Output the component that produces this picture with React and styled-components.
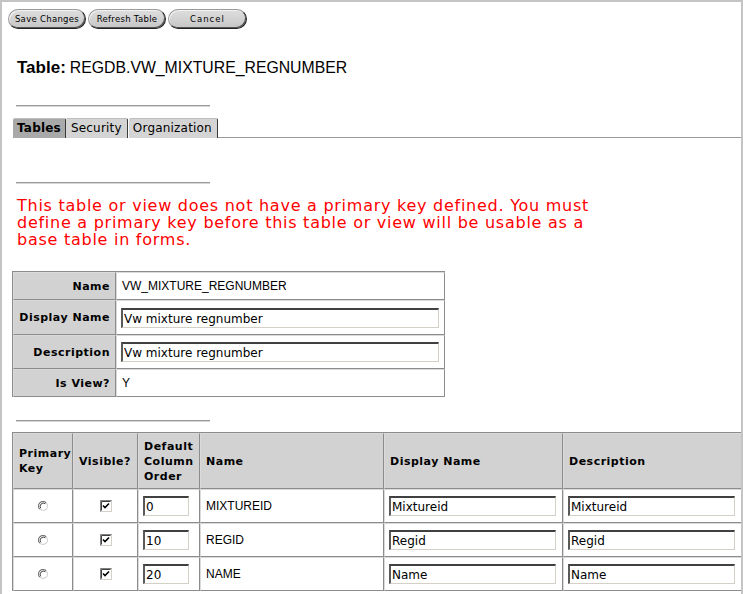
import React from 'react';
import styled, { createGlobalStyle } from 'styled-components';

const GlobalStyle = createGlobalStyle`
  html, body {
    margin: 0;
    padding: 0;
    background: #fff;
  }
  body {
    font-family: "DejaVu Sans", Verdana, sans-serif;
  }
`;

const Frame = styled.div`
  width: 743px;
  height: 594px;
  box-sizing: border-box;
  border: 2px solid #c4c4c4;
  border-bottom: none;
  overflow: hidden;
  background: #fff;
`;

const Toolbar = styled.div`
  display: flex;
  gap: 2px;
  margin: 7px 0 0 6px;
`;

const PillButton = styled.button`
  width: ${p => p.w || 78}px;
  height: 20px;
  padding: 0;
  border-radius: 10px;
  border: 1px solid #9a9a9a;
  border-right-color: #222;
  border-bottom-color: #222;
  box-shadow: inset -1px -1px 0 #555, inset 1px 1px 0 #f2f2f2;
  background: linear-gradient(#dedede, #c6c6c6);
  font-family: "DejaVu Sans", Verdana, sans-serif;
  font-size: 8.5px;
  letter-spacing: ${p => p.ls || 0.3}px;
  color: #000;
  cursor: pointer;
`;

const Title = styled.div`
  margin: 29px 0 0 15px;
  height: 20px;
  line-height: 20px;
  font-family: "Liberation Sans", Arial, sans-serif;
  color: #000;
  white-space: nowrap;
`;

const TitleLabel = styled.span`
  font-size: 17px;
  font-weight: bold;
`;

const TitleValue = styled.span`
  font-size: 15.8px;
  margin-left: 4px;
`;

const Rule = styled.div`
  width: 194px;
  height: 0;
  border-top: 1px solid #9a9a9a;
  border-bottom: 1px solid #d6d6d6;
  margin: ${p => p.mt}px 0 0 14px;
`;

const TabBar = styled.div`
  display: flex;
  align-items: flex-end;
  margin: 10px 0 0 11px;
  height: 21px;
`;

const Tab = styled.div`
  height: 20px;
  box-sizing: border-box;
  padding: 0 ${p => p.pr || 4}px 0 ${p => p.pl || 4}px;
  margin-right: ${p => p.gap || 0}px;
  border-top: 1px solid #bdbdbd;
  border-right: 1px solid #3a3a3a;
  border-radius: 2px 2px 0 0;
  background: ${p => (p.active ? '#a9a9a9' : '#d4d4d4')};
  font-size: 12px;
  font-weight: ${p => (p.active ? 'bold' : 'normal')};
  letter-spacing: 0.2px;
  line-height: 19px;
  color: #000;
  white-space: nowrap;
`;

const TabFill = styled.div`
  flex: 1;
  height: 0;
  border-bottom: 1px solid #9a9a9a;
`;

const Warning = styled.p`
  margin: 13px 0 0 15px;
  width: 600px;
  font-size: 16px;
  line-height: 17px;
  letter-spacing: 0.74px;
  color: #ff0000;
`;

const Grid = styled.table`
  border-collapse: separate;
  border-spacing: 0;
  table-layout: fixed;
  border-left: 1px solid #8c8c8c;
  border-top: 1px solid #8c8c8c;
  margin: ${p => p.mt}px 0 0 10px;
  width: ${p => p.w}px;
`;

const Cell = styled.td`
  box-sizing: border-box;
  height: ${p => p.h}px;
  padding: ${p => (p.field ? '0 5px 0 4px' : '0 5px')};
  border-style: solid;
  border-width: 1px;
  border-color: #dadada #8c8c8c #8c8c8c #dadada;
  background: ${p => (p.head ? '#d2d2d2' : '#fff')};
  text-align: ${p => p.align || 'left'};
  vertical-align: middle;
  font-family: ${p => (p.head ? '"DejaVu Sans", Verdana, sans-serif' : '"Liberation Sans", Arial, sans-serif')};
  font-size: ${p => (p.head ? 11 : 12)}px;
  font-weight: ${p => (p.head ? 'bold' : 'normal')};
  letter-spacing: ${p => (p.head ? 0.5 : 0)}px;
  line-height: 15px;
  color: #000;
  white-space: ${p => (p.wrap ? 'normal' : 'nowrap')};
`;

const Field = styled.input`
  display: block;
  box-sizing: border-box;
  width: ${p => p.w}px;
  height: 20px;
  margin: 0;
  padding: 1px 1px 0;
  border-style: solid;
  border-width: 2px 1px 1px 2px;
  border-color: #404040 #d4d0c8 #d4d0c8 #5a5a5a;
  background: #fff;
  font-family: "DejaVu Sans", Verdana, sans-serif;
  font-size: 12px;
  color: #000;
  outline: none;
`;

const Mark = styled.svg`
  display: block;
  margin: 0 auto;
`;

function Radio() {
  return (
    <Mark width="12" height="12" viewBox="0 0 12 12">
      <circle cx="6" cy="6" r="4.5" fill="#fff" />
      <path d="M2.8 9.2 A4.5 4.5 0 0 1 9.2 2.8" fill="none" stroke="#6a6a6a" strokeWidth="1.1" />
      <path d="M9.2 2.8 A4.5 4.5 0 0 1 2.8 9.2" fill="none" stroke="#d0d0d0" strokeWidth="1.1" />
      <path d="M3.7 8.3 A3.3 3.3 0 0 1 8.3 3.7" fill="none" stroke="#303030" strokeWidth="0.9" />
    </Mark>
  );
}

function Check() {
  return (
    <Mark width="12" height="12" viewBox="0 0 12 12">
      <rect x="0.5" y="0.5" width="11" height="11" fill="#fff" stroke="#d4d0c8" />
      <path d="M0.5 11.5 V0.5 H11.5" fill="none" stroke="#808080" />
      <path d="M1.5 10.5 V1.5 H10.5" fill="none" stroke="#404040" />
      <path d="M3 5.5 L5 7.5 L9 3.5" fill="none" stroke="#000" strokeWidth="1.6" />
    </Mark>
  );
}

const props = [
  { label: 'Name', value: 'VW_MIXTURE_REGNUMBER', h: 28 },
  { label: 'Display Name', input: 'Vw mixture regnumber', h: 35 },
  { label: 'Description', input: 'Vw mixture regnumber', h: 34 },
  { label: 'Is View?', value: 'Y', h: 28 },
];

const columns = [
  { id: 'pk', title: 'Primary Key', w: 60 },
  { id: 'vis', title: 'Visible?', w: 65 },
  { id: 'order', title: 'Default Column Order', w: 62 },
  { id: 'name', title: 'Name', w: 184 },
  { id: 'disp', title: 'Display Name', w: 179 },
  { id: 'desc', title: 'Description', w: 180 },
];

const rows = [
  { order: '0', name: 'MIXTUREID', disp: 'Mixtureid' },
  { order: '10', name: 'REGID', disp: 'Regid' },
  { order: '20', name: 'NAME', disp: 'Name' },
];

export default function App() {
  return (
    <>
      <GlobalStyle />
      <Frame>
        <Toolbar>
          <PillButton>Save Changes</PillButton>
          <PillButton>Refresh Table</PillButton>
          <PillButton w={79} ls={1}>Cancel</PillButton>
        </Toolbar>

        <Title>
          <TitleLabel>Table:</TitleLabel>
          <TitleValue>REGDB.VW_MIXTURE_REGNUMBER</TitleValue>
        </Title>

        <Rule mt={27} />

        <TabBar>
          <Tab active pl={4} pr={4}>Tables</Tab>
          <Tab gap={1} pl={5} pr={5}>Security</Tab>
          <Tab pl={4} pr={5}>Organization</Tab>
          <TabFill />
        </TabBar>

        <Rule mt={44} />

        <Warning>
          This table or view does not have a primary key defined. You must
          define a primary key before this table or view will be usable as a
          base table in forms.
        </Warning>

        <Grid mt={23} w={433}>
          <colgroup>
            <col style={{ width: 103 }} />
            <col style={{ width: 329 }} />
          </colgroup>
          <tbody>
            {props.map(p => (
              <tr key={p.label}>
                <Cell head align="right" h={p.h}>{p.label}</Cell>
                {p.input ? (
                  <Cell field h={p.h}><Field w={318} defaultValue={p.input} /></Cell>
                ) : (
                  <Cell h={p.h}>{p.value}</Cell>
                )}
              </tr>
            ))}
          </tbody>
        </Grid>

        <Rule mt={23} />

        <Grid mt={10} w={731}>
          <colgroup>
            {columns.map(c => <col key={c.id} style={{ width: c.w }} />)}
          </colgroup>
          <thead>
            <tr>
              {columns.map(c => (
                <Cell as="th" head wrap h={56} key={c.id}>{c.title}</Cell>
              ))}
            </tr>
          </thead>
          <tbody>
            {rows.map(r => (
              <tr key={r.name}>
                <Cell h={34} align="center"><Radio /></Cell>
                <Cell h={34} align="center"><Check /></Cell>
                <Cell field h={34}><Field w={46} defaultValue={r.order} /></Cell>
                <Cell h={34}>{r.name}</Cell>
                <Cell field h={34}><Field w={167} defaultValue={r.disp} /></Cell>
                <Cell field h={34}><Field w={167} defaultValue={r.disp} /></Cell>
              </tr>
            ))}
          </tbody>
        </Grid>
      </Frame>
    </>
  );
}
